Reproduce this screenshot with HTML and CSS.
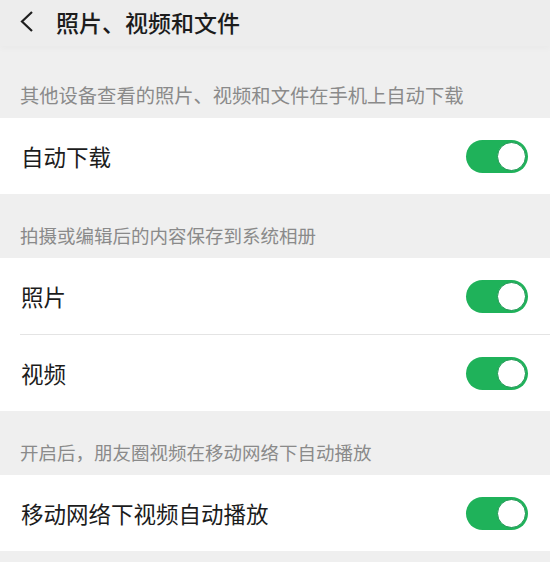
FILE: index.html
```html
<!DOCTYPE html>
<html>

<head>
    <title>照片、视频和文件</title>
    <link rel="stylesheet" href="styles.css">
</head>

<body>
    <div class="topbar">
        <svg class="back" width="16" height="24" viewBox="0 0 16 24">
            <polyline points="13,2 3,11.5 13,21" fill="none" stroke="#1f1f1f" stroke-width="2.2" />
        </svg>
        <span class="title">照片、视频和文件</span>
    </div>

    <div class="tip first">其他设备查看的照片、视频和文件在手机上自动下载</div>
    <div class="group">
        <div class="row"><span class="label">自动下载</span><span class="switch"><span class="knob"></span></span></div>
    </div>

    <div class="tip">拍摄或编辑后的内容保存到系统相册</div>
    <div class="group">
        <div class="row"><span class="label">照片</span><span class="switch"><span class="knob"></span></span></div>
        <div class="divider"></div>
        <div class="row"><span class="label">视频</span><span class="switch"><span class="knob"></span></span></div>
    </div>

    <div class="tip">开启后，朋友圈视频在移动网络下自动播放</div>
    <div class="group">
        <div class="row"><span class="label">移动网络下视频自动播放</span><span class="switch"><span class="knob"></span></span></div>
    </div>
</body>

</html>
```

FILE: styles.css
```css
body {
    margin: 0;
    background: #efefef;
    font-family: "Noto Sans CJK SC", "Noto Sans", sans-serif;
    color: #1c1c1c;
}

.topbar {
    height: 46px;
    display: flex;
    align-items: center;
    padding-left: 19px;
    background: #ededed;
    box-shadow: 0 3px 6px rgba(0, 0, 0, 0.025);
}

.back {
    display: block;
    margin-top: -2px;
}

.title {
    margin-left: 21px;
    font-size: 23px;
    font-weight: 500;
    margin-top: -2px;
}

.tip {
    padding: 27px 20px 9px;
    line-height: 28px;
    font-size: 18.5px;
    color: #8a8a8a;
}

.tip.first {
    padding-top: 35px;
    font-size: 19.3px;
}

.group {
    background: #fff;
}

.row {
    height: 76px;
    display: flex;
    align-items: center;
    justify-content: space-between;
    padding: 0 22px 0 21px;
}

.label {
    font-size: 22.5px;
}

.divider {
    height: 1px;
    margin-left: 20px;
    background: #e4e4e4;
}

.switch {
    position: relative;
    width: 62px;
    height: 33px;
    border-radius: 17px;
    background: #1fb25a;
}

.knob {
    position: absolute;
    top: 2px;
    right: 2px;
    width: 27px;
    height: 27px;
    border-radius: 50%;
    background: #fff;
    border: 1px solid #1a9550;
}
```
